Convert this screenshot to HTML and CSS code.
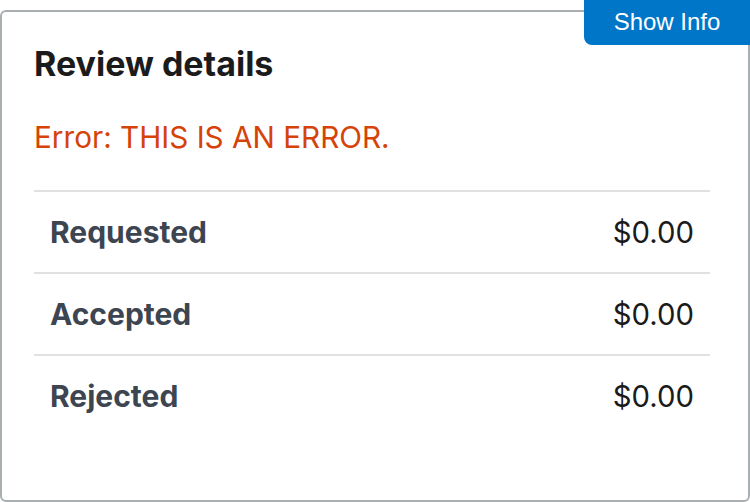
FILE: index.html
```html
<!DOCTYPE html>
<html>
<head>
<meta charset="utf-8">
<link rel="stylesheet" href="styles.css">
</head>
<body>
<div class="page">
  <button class="show-info">Show Info</button>
  <section class="card">
    <h2 class="title">Review details</h2>
    <p class="error">Error: THIS IS AN ERROR.</p>
    <div class="rows">
      <div class="row"><span class="label">Requested</span><span class="value">$0.00</span></div>
      <div class="row"><span class="label">Accepted</span><span class="value">$0.00</span></div>
      <div class="row"><span class="label">Rejected</span><span class="value">$0.00</span></div>
    </div>
  </section>
</div>
</body>
</html>
```
FILE: styles.css
```css
html, body {
  margin: 0;
  padding: 0;
  background: #fff;
}
.page {
  position: relative;
  width: 750px;
  height: 502px;
  padding-top: 10px;
  box-sizing: border-box;
  font-family: Inter, "Noto Sans", sans-serif;
}
.show-info {
  position: absolute;
  top: 0;
  right: 0;
  width: 166px;
  height: 45px;
  border: 0;
  border-radius: 0 0 0 8px;
  background: #0076c9;
  color: #fff;
  font-family: "Liberation Sans", Arial, sans-serif;
  font-size: 24px;
  padding: 0 0 2px;
}
.card {
  height: 492px;
  box-sizing: border-box;
  border: 2px solid #a9aeb1;
  border-radius: 6px;
  padding: 0 38px 0 32px;
}
.title {
  margin: 32px 0 0;
  font-size: 34px;
  line-height: 40px;
  font-weight: 700;
  color: #1b1b1b;
}
.error {
  margin: 35px 0 0;
  font-size: 29.7px;
  line-height: 36px;
  color: #d54309;
}
.rows {
  margin-top: 35px;
}
.row {
  display: flex;
  justify-content: space-between;
  align-items: center;
  box-sizing: border-box;
  height: 82px;
  border-top: 2px solid #dfe1e2;
  padding: 0 16px 0 16px;
}
.label {
  font-size: 30px;
  font-weight: 700;
  color: #3d4551;
}
.value {
  font-size: 29.3px;
  color: #1b1b1b;
}
```
